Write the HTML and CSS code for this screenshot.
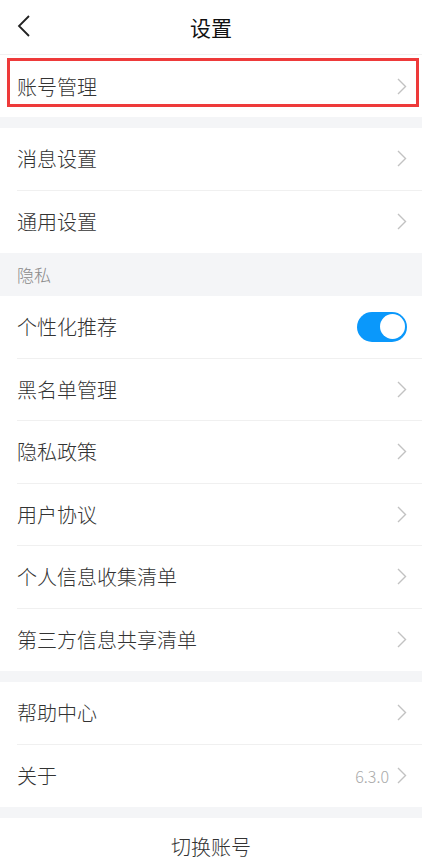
FILE: index.html
```html
<!DOCTYPE html>
<html lang="zh-CN">
<head>
    <meta charset="UTF-8">
    <meta name="viewport" content="width=device-width, initial-scale=1.0">
    <title>设置</title>
    <link rel="stylesheet" href="styles.css">
</head>
<body>
    <div class="header">
        <svg class="back" width="14" height="22" viewBox="0 0 14 22">
            <polyline points="12,1 2,11 12,21" fill="none" stroke="#222" stroke-width="1.8"/>
        </svg>
        <h1>设置</h1>
    </div>

    <div class="group">
        <div class="row highlighted">
            <div class="row-inner">
                <span class="label">账号管理</span>
                <svg class="chevron" width="10" height="17" viewBox="0 0 10 17"><polyline points="1,1 8.5,8.5 1,16" fill="none" stroke="#c2c2c2" stroke-width="1.4"/></svg>
            </div>
            <div class="mark"></div>
        </div>
    </div>

    <div class="gap"></div>

    <div class="group">
        <div class="row">
            <div class="row-inner">
                <span class="label">消息设置</span>
                <svg class="chevron" width="10" height="17" viewBox="0 0 10 17"><polyline points="1,1 8.5,8.5 1,16" fill="none" stroke="#c2c2c2" stroke-width="1.4"/></svg>
            </div>
        </div>
        <div class="row">
            <div class="row-inner">
                <span class="label">通用设置</span>
                <svg class="chevron" width="10" height="17" viewBox="0 0 10 17"><polyline points="1,1 8.5,8.5 1,16" fill="none" stroke="#c2c2c2" stroke-width="1.4"/></svg>
            </div>
        </div>
    </div>

    <div class="section-title">隐私</div>

    <div class="group">
        <div class="row">
            <div class="row-inner">
                <span class="label">个性化推荐</span>
                <span class="toggle on"></span>
            </div>
        </div>
        <div class="row">
            <div class="row-inner">
                <span class="label">黑名单管理</span>
                <svg class="chevron" width="10" height="17" viewBox="0 0 10 17"><polyline points="1,1 8.5,8.5 1,16" fill="none" stroke="#c2c2c2" stroke-width="1.4"/></svg>
            </div>
        </div>
        <div class="row">
            <div class="row-inner">
                <span class="label">隐私政策</span>
                <svg class="chevron" width="10" height="17" viewBox="0 0 10 17"><polyline points="1,1 8.5,8.5 1,16" fill="none" stroke="#c2c2c2" stroke-width="1.4"/></svg>
            </div>
        </div>
        <div class="row">
            <div class="row-inner">
                <span class="label">用户协议</span>
                <svg class="chevron" width="10" height="17" viewBox="0 0 10 17"><polyline points="1,1 8.5,8.5 1,16" fill="none" stroke="#c2c2c2" stroke-width="1.4"/></svg>
            </div>
        </div>
        <div class="row">
            <div class="row-inner">
                <span class="label">个人信息收集清单</span>
                <svg class="chevron" width="10" height="17" viewBox="0 0 10 17"><polyline points="1,1 8.5,8.5 1,16" fill="none" stroke="#c2c2c2" stroke-width="1.4"/></svg>
            </div>
        </div>
        <div class="row">
            <div class="row-inner">
                <span class="label">第三方信息共享清单</span>
                <svg class="chevron" width="10" height="17" viewBox="0 0 10 17"><polyline points="1,1 8.5,8.5 1,16" fill="none" stroke="#c2c2c2" stroke-width="1.4"/></svg>
            </div>
        </div>
    </div>

    <div class="gap"></div>

    <div class="group">
        <div class="row">
            <div class="row-inner">
                <span class="label">帮助中心</span>
                <svg class="chevron" width="10" height="17" viewBox="0 0 10 17"><polyline points="1,1 8.5,8.5 1,16" fill="none" stroke="#c2c2c2" stroke-width="1.4"/></svg>
            </div>
        </div>
        <div class="row">
            <div class="row-inner">
                <span class="label">关于</span>
                <span class="value">6.3.0</span>
                <svg class="chevron" width="10" height="17" viewBox="0 0 10 17"><polyline points="1,1 8.5,8.5 1,16" fill="none" stroke="#c2c2c2" stroke-width="1.4"/></svg>
            </div>
        </div>
    </div>

    <div class="gap"></div>

    <div class="switch-account">切换账号</div>
</body>
</html>
```

FILE: styles.css
```css
body {
    margin: 0;
    padding: 0;
    background-color: #fff;
    color: #333;
    font-family: "Noto Sans CJK SC", "Noto Sans", sans-serif;
}

.header {
    height: 55px;
    display: flex;
    align-items: center;
    justify-content: center;
    position: relative;
    border-bottom: 1px solid #f1f1f1;
    box-sizing: border-box;
}

.header h1 {
    margin: 0;
    font-size: 21px;
    font-weight: 400;
    color: #111;
}

.back {
    position: absolute;
    left: 17px;
    top: 15px;
}

.gap {
    height: 11px;
    background-color: #f4f5f7;
}

.row {
    position: relative;
    padding-left: 17px;
}

.row-inner {
    height: 62.5px;
    box-sizing: border-box;
    display: flex;
    align-items: center;
    padding-right: 15px;
    border-bottom: 1px solid #f0f0f0;
}

.row:last-child .row-inner {
    border-bottom: none;
}

.highlighted .row-inner {
    height: 62px;
}

.label {
    flex: 1;
    font-size: 20px;
    font-weight: 300;
    color: #333;
}

.value {
    font-family: "Noto Sans CJK SC", "Noto Sans", sans-serif;
    font-size: 16px;
    font-weight: 300;
    color: #aaa;
    margin-right: 8px;
}

.chevron {
    display: block;
}

/* red annotation frame over the first row */
.mark {
    position: absolute;
    top: 3px;
    left: 7px;
    right: 3px;
    height: 49px;
    border: 3px solid #ee3a3a;
    box-sizing: border-box;
}

.section-title {
    height: 43px;
    background-color: #f4f5f7;
    padding-left: 17px;
    display: flex;
    align-items: center;
    font-size: 17px;
    font-weight: 300;
    color: #8a8a8a;
}

.toggle {
    width: 50px;
    height: 30px;
    border-radius: 15px;
    background-color: #e5e5e5;
    position: relative;
}

.toggle.on {
    background-color: #0a98fb;
}

.toggle::after {
    content: "";
    position: absolute;
    top: 2.5px;
    left: 2.5px;
    width: 25px;
    height: 25px;
    border-radius: 50%;
    background-color: #fff;
}

.toggle.on::after {
    left: auto;
    right: 2.5px;
}

.switch-account {
    height: 56px;
    display: flex;
    align-items: center;
    justify-content: center;
    font-size: 20px;
    font-weight: 300;
    color: #333;
}
```
